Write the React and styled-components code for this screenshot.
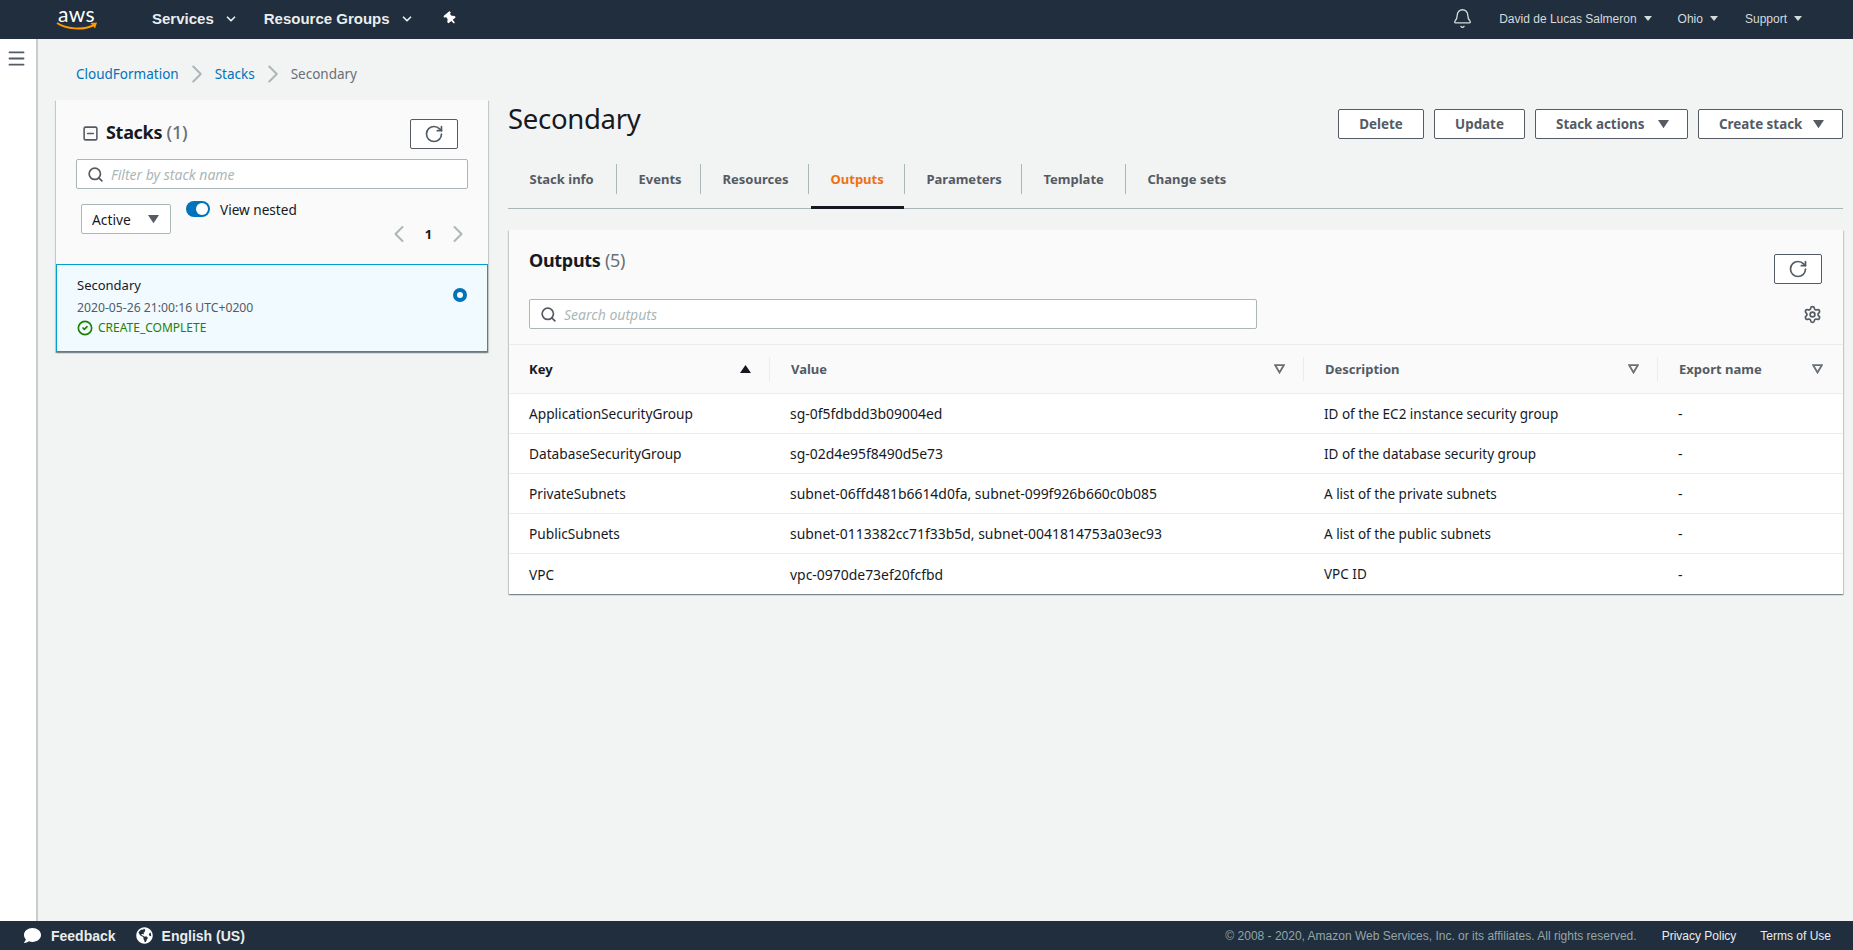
import React from "react";
import styled, { createGlobalStyle } from "styled-components";
import { Bell, ChevronDown, ChevronLeft, ChevronRight, CircleCheck, Menu, RotateCw, Search, Settings, SquareMinus } from "lucide-react";
import { FaGlobeAmericas, FaThumbtack, FaComment } from "react-icons/fa";

const Global = createGlobalStyle`
  html, body { margin: 0; padding: 0; height: 100%; }
  * { box-sizing: border-box; }
  body { font-family: "Noto Sans", "Liberation Sans", sans-serif; font-size: 14px; color: #16191f; }
`;

const Page = styled.div`display: flex; flex-direction: column; height: 950px; overflow: hidden; background: #f2f3f3;`;
const TopBar = styled.header`height: 39px; flex: none; background: #202e3e; display: flex; align-items: center; padding-bottom: 2px; font-family: "Liberation Sans", sans-serif; color: #eaeded;`;
const Logo = styled.div`position: relative; width: 42px; height: 26px; margin-left: 56px; margin-right: 54px;`;
const LogoText = styled.span`position: absolute; left: 2px; top: -2px; font: 400 21px/20px "Lato", sans-serif; color: #fff; letter-spacing: 0.4px;`;
const LogoSmile = styled.svg`position: absolute; left: 0; top: 16px;`;
const NavLink = styled.span`font-weight: 700; font-size: 15px; margin-right: ${p => p.$mr}px; color: #eaeded; white-space: nowrap;`;
const NavChevron = styled(ChevronDown)`color: #eaeded; margin-right: ${p => p.$mr}px; flex: none;`;
const Pin = styled(FaThumbtack)`color: #fff; transform: rotate(-40deg); flex: none;`;
const Spacer = styled.div`flex: 1;`;
const BellIcon = styled(Bell)`color: #d5dbdb; margin-right: 26px; flex: none;`;
const UserLink = styled.span`font-size: 12px; color: #d5dbdb; margin-right: 7px; white-space: nowrap;`;
const SmallCaret = styled.svg`margin-right: ${p => p.$mr}px; flex: none;`;

const Body = styled.div`flex: 1; display: flex; min-height: 0;`;
const Sidebar = styled.aside`width: 38px; flex: none; background: #fff; border-right: 2px solid #c9cdce; padding: 9px 0 0 6px; color: #545b64;`;
const Content = styled.main`flex: 1; padding: 0 10px 0 18px; min-width: 0;`;

const Breadcrumbs = styled.nav`height: 61px; padding: 9px 0 0 20px; display: flex; align-items: center; font-size: 13.5px;`;
const Crumb = styled.a`color: ${p => (p.$current ? "#687078" : "#0073bb")};`;
const CrumbSep = styled(ChevronRight)`color: #aab7b8; margin: 0 ${p => p.$m}px; flex: none;`;

const Columns = styled.div`display: flex; gap: 20px; align-items: flex-start;`;
const Card = styled.section`background: #fafafa; box-shadow: 0 1px 1px 0 rgba(0,28,36,.3), 1px 1px 1px 0 rgba(0,28,36,.15), -1px 1px 1px 0 rgba(0,28,36,.15);`;
const StackCard = styled(Card)`width: 432px; flex: none;`;
const StackHead = styled.div`height: 164px; padding: 19px 20px 0;`;
const StackTitleRow = styled.div`display: flex; align-items: center; height: 29px; padding: 0 10px 0 6px;`;
const CollapseIcon = styled(SquareMinus)`color: #545b64; margin-right: 7px; flex: none;`;
const StackTitle = styled.h2`margin: -2px 0 0; font-size: 18px; font-weight: 700; line-height: 29px; flex: 1; letter-spacing: -0.3px;`;
const Count = styled.span`color: #687078; font-weight: 500;`;
const IconButton = styled.button`width: ${p => p.$w}px; height: 30px; padding: 0; background: #fff; border: 1px solid #545b64; border-radius: 2px; color: #545b64; display: flex; align-items: center; justify-content: center;`;
const SearchBox = styled.div`display: flex; align-items: center; height: 30px; background: #fff; border: 1px solid #aab7b8; border-radius: 2px; padding-left: 10px; width: ${p => p.$w || "auto"}; margin-top: ${p => p.$mt || 0}px; gap: 7px; color: #545b64;`;
const Placeholder = styled.span`font-style: italic; font-size: 14px; color: #aab7b8;`;
const FilterRow = styled.div`display: flex; padding: 15px 10px 0 5px; align-items: flex-start;`;
const SelectBox = styled.div`width: 90px; height: 30px; flex: none; background: #fff; border: 1px solid #aab7b8; border-radius: 2px; display: flex; align-items: center; justify-content: space-between; padding: 0 11px 0 10px; font-size: 13.8px; color: #16191f;`;
const RightStack = styled.div`flex: 1; margin-left: 15px; margin-top: -3px;`;
const ToggleRow = styled.div`display: flex; align-items: center; gap: 10px; font-size: 13.6px; height: 16px;`;
const ToggleTrack = styled.div`width: 24px; height: 16px; background: #0073bb; border-radius: 8px; display: flex; justify-content: flex-end; align-items: center; padding-right: 2px;`;
const ToggleKnob = styled.div`width: 12px; height: 12px; border-radius: 50%; background: #fff;`;
const Pager = styled.div`display: flex; align-items: center; justify-content: flex-end; margin: 7px -14px 0 0; height: 20px; color: #aab7b8;`;
const PageNum = styled.span`font-size: 13px; font-weight: 700; color: #16191f; width: 31px; text-align: center;`;

const StackItem = styled.div`height: 88px; background: #f1faff; border: 1px solid #00a1c9; padding: 10px 0 0 20px; position: relative;`;
const ItemName = styled.div`font-size: 13px; line-height: 20px; color: #16191f;`;
const ItemDate = styled.div`font-size: 12.2px; line-height: 20px; margin-top: 3px; color: #545b64;`;
const ItemStatus = styled.div`display: flex; align-items: center; gap: 5px; font-size: 12px; line-height: 20px; color: #1d8102;`;
const Radio = styled.div`position: absolute; right: 20px; top: 23px; width: 14px; height: 14px; border: 4px solid #0073bb; border-radius: 50%; background: #fff;`;

const MainCol = styled.div`flex: 1; min-width: 0;`;
const TitleRow = styled.div`height: 64px; display: flex; justify-content: space-between; align-items: flex-start;`;
const PageTitle = styled.h1`margin: 0; font-size: 27.5px; font-weight: 400; line-height: 38px; letter-spacing: -0.3px;`;
const Actions = styled.div`display: flex; gap: 10px; padding-top: 9px;`;
const ActionBtn = styled.button`width: ${p => p.$w}px; height: 30px; padding: 0 ${p => (p.$caret ? 18 : 0)}px 0 ${p => (p.$caret ? 20 : 0)}px; background: #fff; border: 1px solid #545b64; border-radius: 2px; color: #545b64; font: 700 13.4px "Noto Sans", sans-serif; display: flex; align-items: center; justify-content: ${p => (p.$caret ? "space-between" : "center")}; white-space: nowrap;`;
const TabBar = styled.div`height: 45px; border-bottom: 1px solid #aab7b8; display: flex;`;
const Tab = styled.div`position: relative; width: ${p => p.$w}px; height: 30px; padding-left: 21.5px; font-weight: 700; font-size: 13px; line-height: 30px; color: ${p => (p.$active ? "#ec7211" : "#545b64")}; border-right: ${p => (p.$last ? "none" : "1px solid #aab7b8")}; white-space: nowrap;
  ${p => p.$active && `&::after { content: ""; position: absolute; left: 2px; right: 0; top: 42px; height: 3px; background: #16191f; }`}`;

const OutputCard = styled(Card)`margin: 21px 0 0 1px;`;
const OutHead = styled.div`height: 115px; padding: 20px 21px 0 20px; border-bottom: 1px solid #eaeded;`;
const OutTop = styled.div`display: flex; justify-content: space-between; height: 34px;`;
const OutTitle = styled.h2`margin: 0; font-size: 18px; line-height: 20px; font-weight: 700; letter-spacing: -0.3px;`;
const OutCount = styled.span`color: #687078; font-weight: 400;`;
const RefreshSlot = styled.div`padding-top: 4px;`;
const OutSearchRow = styled.div`display: flex; justify-content: space-between; align-items: center; margin-top: 15px;`;
const Gear = styled(Settings)`color: #545b64;`;
const HeaderRow = styled.div`display: grid; grid-template-columns: 261px 534px 354px 1fr; height: 49px; align-items: center; border-bottom: 1px solid #eaeded;`;
const HeadCell = styled.div`height: 24px; display: flex; align-items: center; justify-content: space-between; padding: 0 ${p => p.$pr}px 0 ${p => p.$pl}px; font-weight: 700; font-size: 13px; color: ${p => (p.$sorted ? "#16191f" : "#545b64")}; border-right: ${p => (p.$last ? "none" : "1px solid #eaeded")};`;
const Rows = styled.div`background: #fff;`;
const Row = styled.div`display: grid; grid-template-columns: 261px 534px 354px 1fr; height: 40px; align-items: center; border-bottom: ${p => (p.$last ? "none" : "1px solid #eaeded")};`;
const Cell = styled.div`padding-left: 20px; font-size: ${p => p.$fs}px; white-space: nowrap; color: #16191f;`;

const Footer = styled.footer`height: 29px; flex: none; background: #202e3e; display: flex; align-items: center; font-family: "Liberation Sans", sans-serif; padding-left: 24px;`;
const FootIcon = styled.span`display: flex; color: #fff; margin-right: ${p => p.$mr}px;`;
const FootLink = styled.span`font-weight: 700; font-size: 14px; color: #eaeded; margin-right: ${p => p.$mr}px; white-space: nowrap;`;
const Copy = styled.span`font-size: 12px; color: #95a5a6; margin-right: 25px; white-space: nowrap;`;
const Legal = styled.span`font-size: 12px; color: #eaeded; margin-right: ${p => p.$mr}px; white-space: nowrap;`;

const Caret = ({ size = 11, color = "#545b64" }) => (
  <svg width={size} height={size * 0.75} viewBox="0 0 12 9"><polygon points="0,0 12,0 6,9" fill={color} /></svg>
);
const FilterIcon = () => (
  <svg width="11" height="10" viewBox="0 0 11 10"><polygon points="1.2,1.2 9.800,1.2 5.500,8.500" fill="none" stroke="#687078" strokeWidth="1.8" /></svg>
);
const SortIcon = () => (
  <svg width="11" height="8" viewBox="0 0 11 8"><polygon points="0,8 11,8 5.5,0" fill="#16191f" /></svg>
);
const TinyCaret = ({ mr }) => (
  <SmallCaret $mr={mr} width="8" height="5" viewBox="0 0 8 5"><polygon points="0,0 8,0 4,5" fill="#d5dbdb" /></SmallCaret>
);

const tabs = [["Stack info", 109], ["Events", 84], ["Resources", 108], ["Outputs", 96], ["Parameters", 117], ["Template", 104], ["Change sets", 120]];
const rows = [
  ["ApplicationSecurityGroup", "sg-0f5fdbdd3b09004ed", "ID of the EC2 instance security group"],
  ["DatabaseSecurityGroup", "sg-02d4e95f8490d5e73", "ID of the database security group"],
  ["PrivateSubnets", "subnet-06ffd481b6614d0fa, subnet-099f926b660c0b085", "A list of the private subnets"],
  ["PublicSubnets", "subnet-0113382cc71f33b5d, subnet-0041814753a03ec93", "A list of the public subnets"],
  ["VPC", "vpc-0970de73ef20fcfbd", "VPC ID"],
];

export default function App() {
  return (
    <Page>
      <Global />
      <TopBar>
        <Logo>
          <LogoText>aws</LogoText>
          <LogoSmile width="42" height="10" viewBox="0 0 42 10">
            <path d="M1 1C10 7 27 8.500 37 3.500" fill="none" stroke="#f90" strokeWidth="2" />
            <path d="M34.500 1L41 .5L39 6.500Z" fill="#f90" />
          </LogoSmile>
        </Logo>
        <NavLink $mr={10}>Services</NavLink>
        <NavChevron $mr={26} size={14} strokeWidth={3} />
        <NavLink $mr={10}>Resource Groups</NavLink>
        <NavChevron $mr={30} size={14} strokeWidth={3} />
        <Pin size={13} />
        <Spacer />
        <BellIcon size={21} strokeWidth={1.5} />
        <UserLink>David de Lucas Salmeron</UserLink>
        <TinyCaret mr={26} />
        <UserLink>Ohio</UserLink>
        <TinyCaret mr={27} />
        <UserLink>Support</UserLink>
        <TinyCaret mr={51} />
      </TopBar>
      <Body>
        <Sidebar><Menu size={21} strokeWidth={2.1} /></Sidebar>
        <Content>
          <Breadcrumbs>
            <Crumb>CloudFormation</Crumb>
            <CrumbSep $m={3} size={30} strokeWidth={1.6} />
            <Crumb>Stacks</Crumb>
            <CrumbSep $m={3} size={30} strokeWidth={1.6} />
            <Crumb $current>Secondary</Crumb>
          </Breadcrumbs>
          <Columns>
            <StackCard>
              <StackHead>
                <StackTitleRow>
                  <CollapseIcon size={17} strokeWidth={2.2} />
                  <StackTitle>Stacks <Count>(1)</Count></StackTitle>
                  <IconButton $w={48}><RotateCw size={20} strokeWidth={2} /></IconButton>
                </StackTitleRow>
                <SearchBox $mt={11}>
                  <Search size={17} strokeWidth={2.4} />
                  <Placeholder>Filter by stack name</Placeholder>
                </SearchBox>
                <FilterRow>
                  <SelectBox>Active <Caret /></SelectBox>
                  <RightStack>
                    <ToggleRow>
                      <ToggleTrack><ToggleKnob /></ToggleTrack>
                      View nested
                    </ToggleRow>
                    <Pager>
                      <ChevronLeft size={28} strokeWidth={1.7} />
                      <PageNum>1</PageNum>
                      <ChevronRight size={28} strokeWidth={1.7} />
                    </Pager>
                  </RightStack>
                </FilterRow>
              </StackHead>
              <StackItem>
                <ItemName>Secondary</ItemName>
                <ItemDate>2020-05-26 21:00:16 UTC+0200</ItemDate>
                <ItemStatus><CircleCheck size={16} strokeWidth={2.5} />CREATE_COMPLETE</ItemStatus>
                <Radio />
              </StackItem>
            </StackCard>
            <MainCol>
              <TitleRow>
                <PageTitle>Secondary</PageTitle>
                <Actions>
                  <ActionBtn $w={86}>Delete</ActionBtn>
                  <ActionBtn $w={91}>Update</ActionBtn>
                  <ActionBtn $w={153} $caret>Stack actions <Caret /></ActionBtn>
                  <ActionBtn $w={145} $caret>Create stack <Caret /></ActionBtn>
                </Actions>
              </TitleRow>
              <TabBar>
                {tabs.map(([t, w], i) => (
                  <Tab key={t} $w={w} $active={t === "Outputs"} $last={i === tabs.length - 1}>{t}</Tab>
                ))}
              </TabBar>
              <OutputCard>
                <OutHead>
                  <OutTop>
                    <OutTitle>Outputs <OutCount>(5)</OutCount></OutTitle>
                    <RefreshSlot><IconButton $w={48}><RotateCw size={20} strokeWidth={2} /></IconButton></RefreshSlot>
                  </OutTop>
                  <OutSearchRow>
                    <SearchBox $w="728px">
                      <Search size={17} strokeWidth={2.4} />
                      <Placeholder>Search outputs</Placeholder>
                    </SearchBox>
                    <Gear size={19} strokeWidth={2.2} />
                  </OutSearchRow>
                </OutHead>
                <HeaderRow>
                  <HeadCell $sorted $pl={20} $pr={18}>Key <SortIcon /></HeadCell>
                  <HeadCell $pl={21} $pr={18}>Value <FilterIcon /></HeadCell>
                  <HeadCell $pl={21} $pr={18}>Description <FilterIcon /></HeadCell>
                  <HeadCell $last $pl={21} $pr={20}>Export name <FilterIcon /></HeadCell>
                </HeaderRow>
                <Rows>
                  {rows.map((r, i) => (
                    <Row key={r[0]} $last={i === rows.length - 1}>
                      <Cell $fs={13.7}>{r[0]}</Cell>
                      <Cell $fs={13.95}>{r[1]}</Cell>
                      <Cell $fs={13.5}>{r[2]}</Cell>
                      <Cell $fs={14}>-</Cell>
                    </Row>
                  ))}
                </Rows>
              </OutputCard>
            </MainCol>
          </Columns>
        </Content>
      </Body>
      <Footer>
        <FootIcon $mr={10}><FaComment size={17} /></FootIcon>
        <FootLink $mr={20}>Feedback</FootLink>
        <FootIcon $mr={9}><FaGlobeAmericas size={17} /></FootIcon>
        <FootLink $mr={0}>English (US)</FootLink>
        <Spacer />
        <Copy>© 2008 - 2020, Amazon Web Services, Inc. or its affiliates. All rights reserved.</Copy>
        <Legal $mr={24}>Privacy Policy</Legal>
        <Legal $mr={22}>Terms of Use</Legal>
      </Footer>
    </Page>
  );
}
